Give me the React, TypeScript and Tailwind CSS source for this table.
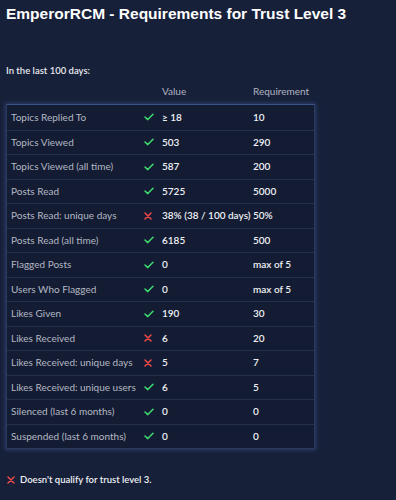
import React from 'react'

type Row = { label: string; ok: boolean; value: string; req: string }

const rows: Row[] = [
  { label: 'Topics Replied To', ok: true, value: '≥ 18', req: '10' },
  { label: 'Topics Viewed', ok: true, value: '503', req: '290' },
  { label: 'Topics Viewed (all time)', ok: true, value: '587', req: '200' },
  { label: 'Posts Read', ok: true, value: '5725', req: '5000' },
  { label: 'Posts Read: unique days', ok: false, value: '38% (38 / 100 days)', req: '50%' },
  { label: 'Posts Read (all time)', ok: true, value: '6185', req: '500' },
  { label: 'Flagged Posts', ok: true, value: '0', req: 'max of 5' },
  { label: 'Users Who Flagged', ok: true, value: '0', req: 'max of 5' },
  { label: 'Likes Given', ok: true, value: '190', req: '30' },
  { label: 'Likes Received', ok: false, value: '6', req: '20' },
  { label: 'Likes Received: unique days', ok: false, value: '5', req: '7' },
  { label: 'Likes Received: unique users', ok: true, value: '6', req: '5' },
  { label: 'Silenced (last 6 months)', ok: true, value: '0', req: '0' },
  { label: 'Suspended (last 6 months)', ok: true, value: '0', req: '0' },
]

function Check() {
  return (
    <svg width="10" height="8" viewBox="0 0 10 8" fill="none">
      <path d="M1 4 L3.8 6.6 L9 1.2" stroke="#3ddc6e" strokeWidth="1.5" strokeLinecap="round" strokeLinejoin="round" />
    </svg>
  )
}

function Cross() {
  return (
    <svg width="8" height="8" viewBox="0 0 8 8" fill="none">
      <path d="M1 1 L7 7 M7 1 L1 7" stroke="#ef4a4a" strokeWidth="1.5" strokeLinecap="round" />
    </svg>
  )
}

export default function App() {
  return (
    <div className="min-h-[500px] w-[396px] bg-[#172039] px-[6px] pt-[2px] text-white" style={{ fontFamily: 'Lato, "Noto Sans", sans-serif' }}>
      <h1 className="text-[15.5px] font-bold leading-[24px] text-white whitespace-nowrap" style={{ fontFamily: '"Liberation Sans", Arial, sans-serif' }}>
        EmperorRCM - Requirements for Trust Level 3
      </h1>

      <p className="mt-[37px] text-[9.5px] font-semibold leading-[16px] text-[#e8eaef]">In the last 100 days:</p>

      {/* header */}
      <div className="mt-[4px] flex text-[10px] leading-[16px] text-[#aeb4c0]">
        <div className="w-[156px]" />
        <div className="w-[91px]">Value</div>
        <div>Requirement</div>
      </div>

      {/* table */}
      <div className="mt-[5px] w-[309px] border border-[#2a3a60] border-t-[#3a5488] bg-[#141c33] shadow-[0_0_4px_1px_rgba(70,100,170,0.45)]">
        {rows.map((r, i) => (
          <div
            key={r.label}
            className={`flex h-[24.5px] items-center ${i > 0 ? 'border-t border-[#24304c]' : ''}`}
          >
            <div className="w-[136px] pl-[4px] text-[10px] text-[#b3b8c3] whitespace-nowrap">{r.label}</div>
            <div className="flex w-[19px] items-center pl-[1px]">{r.ok ? <Check /> : <Cross />}</div>
            <div className="w-[91px] text-[10px] font-semibold text-[#eef0f4] whitespace-nowrap">{r.value}</div>
            <div className="text-[10px] font-semibold text-[#eef0f4] whitespace-nowrap">{r.req}</div>
          </div>
        ))}
      </div>

      <p className="mt-[23px] flex items-center gap-[5px] pl-[1px] text-[9.5px] font-semibold leading-[16px] text-[#eef0f4]">
        <Cross />
        Doesn't qualify for trust level 3.
      </p>
    </div>
  )
}
